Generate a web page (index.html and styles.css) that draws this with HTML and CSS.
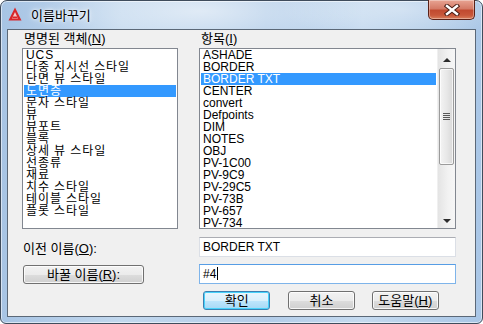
FILE: index.html
```html
<!DOCTYPE html>
<html lang="ko">
  <head>
    <meta charset="UTF-8" />
    <title>이름바꾸기</title>
    <link rel="stylesheet" href="styles.css">
  </head>
  <body>
    <!-- 대화상자 창 -->
    <div class="window">
      <div class="titlebar">
        <svg class="app-icon" width="14" height="14" viewBox="0 0 14 14">
          <polygon points="7,0.5 13.5,13.5 0.5,13.5" fill="#d8262a"/>
          <polygon points="7,5 10,11.5 4,11.5" fill="#f6c9c6"/>
          <rect x="4.5" y="9.5" width="5" height="1.6" fill="#d8262a"/>
        </svg>
        <span class="title">이름바꾸기</span>
        <div class="close-btn">
          <svg width="16" height="12" viewBox="0 0 16 12">
            <path d="M3 2 L13 10 M13 2 L3 10" stroke="#4a1d15" stroke-width="4.4" stroke-linecap="square"/>
            <path d="M3 2 L13 10 M13 2 L3 10" stroke="#ffffff" stroke-width="2.4" stroke-linecap="square"/>
          </svg>
        </div>
      </div>

      <div class="client">
        <div class="lists">
          <div class="col">
            <div class="label">명명된 객체(<u>N</u>)</div>
            <div class="listbox left-box">
              <ul class="items hangul">
                <li>UCS</li>
                <li>다중 지시선 스타일</li>
                <li>단면 뷰 스타일</li>
                <li class="sel">도면층</li>
                <li>문자 스타일</li>
                <li>뷰</li>
                <li>뷰포트</li>
                <li>블록</li>
                <li>상세 뷰 스타일</li>
                <li>선종류</li>
                <li>재료</li>
                <li>치수 스타일</li>
                <li>테이블 스타일</li>
                <li>플롯 스타일</li>
              </ul>
            </div>
          </div>
          <div class="col">
            <div class="label">항목(<u>I</u>)</div>
            <div class="listbox right-box">
              <ul class="items latin">
                <li>ASHADE</li>
                <li>BORDER</li>
                <li class="sel">BORDER TXT</li>
                <li>CENTER</li>
                <li>convert</li>
                <li>Defpoints</li>
                <li>DIM</li>
                <li>NOTES</li>
                <li>OBJ</li>
                <li>PV-1C00</li>
                <li>PV-9C9</li>
                <li>PV-29C5</li>
                <li>PV-73B</li>
                <li>PV-657</li>
                <li>PV-734</li>
              </ul>
              <!-- 스크롤바 -->
              <div class="scrollbar">
                <div class="sb-btn"><span class="arrow up"></span></div>
                <div class="sb-track">
                  <div class="sb-thumb">
                    <div class="grip"></div>
                  </div>
                </div>
                <div class="sb-btn"><span class="arrow down"></span></div>
              </div>
            </div>
          </div>
        </div>

        <div class="form-row">
          <div class="form-left"><span class="plain-label">이전 이름(<u>O</u>):</span></div>
          <div class="field latin">BORDER TXT</div>
        </div>
        <div class="form-row row2">
          <div class="form-left"><div class="btn rename-btn">바꿀 이름(<u>R</u>):</div></div>
          <div class="field latin focus">#4<span class="caret"></span></div>
        </div>
        <div class="buttons">
          <div class="btn default">확인</div>
          <div class="btn">취소</div>
          <div class="btn">도움말(<u>H</u>)</div>
        </div>
      </div>
    </div>
  </body>
</html>
```

FILE: styles.css
```css
* {
  list-style: none;
  padding: 0;
  margin: 0;
  box-sizing: border-box;
}
body {
  width: 483px;
  height: 324px;
  overflow: hidden;
  font-family: "Liberation Sans", "Noto Sans CJK KR", sans-serif;
  font-size: 13px;
  color: #000;
  background: #fff;
}
.latin {
  font-size: 12px;
}

/* 창 테두리 */
.window {
  width: 483px;
  height: 324px;
  border: 1px solid #3f4c5c;
  border-radius: 7px 7px 6px 6px;
  padding: 0 6px 6px 6px;
  background:
    radial-gradient(ellipse 160px 40px at 200px 10px, rgba(255,255,255,0.55), rgba(255,255,255,0)),
    radial-gradient(ellipse 120px 30px at 400px 8px, rgba(255,255,255,0.35), rgba(255,255,255,0)),
    linear-gradient(to right, #a7c4e4, #c2d8ee 25%, #b3cde9 55%, #c5daef 75%, #a9c6e6);
  box-shadow: inset 0 0 0 1px rgba(255,255,255,0.55);
  position: relative;
}
.titlebar {
  height: 28px;
  display: flex;
  align-items: center;
  padding-left: 1px;
  padding-bottom: 2px;
}
.app-icon {
  margin-right: 9px;
}
.title {
  text-shadow: 0 0 6px #fff, 0 0 3px #fff;
}
.close-btn {
  position: absolute;
  top: -1px;
  right: 7px;
  width: 47px;
  height: 20px;
  border: 1px solid #5a2117;
  border-top: none;
  border-radius: 0 0 5px 5px;
  background: linear-gradient(to bottom, #e8a493 0%, #d57b67 45%, #c14a30 55%, #c8573a 80%, #d97f5c 100%);
  box-shadow: inset 0 0 0 1px rgba(255,255,255,0.35);
  display: flex;
  align-items: center;
  justify-content: center;
}

/* 클라이언트 영역 */
.client {
  height: 288px;
  border: 1px solid #5b6877;
  background: #f0f0f0;
  padding: 2px 18px 0 14px;
}
.lists {
  display: grid;
  grid-template-columns: 156px 257px;
  column-gap: 21px;
}
.label {
  height: 16px;
  line-height: 14px;
  padding-left: 2px;
}
.listbox {
  height: 181px;
  border: 1px solid #828790;
  background: #fff;
  display: flex;
  overflow: hidden;
}
.items {
  flex: 1;
  padding: 0 1px;
  min-width: 0;
}
.items li {
  height: 12px;
  line-height: 12px;
  padding-left: 2px;
  white-space: nowrap;
}
.hangul li {
  font-size: 12px;
  letter-spacing: 0.9px;
}
.items li.sel {
  background: #3399ff;
  color: #fff;
}

/* 스크롤바 */
.scrollbar {
  width: 18px;
  display: flex;
  flex-direction: column;
  background: linear-gradient(to right, #e4e4e4, #f2f2f2 60%, #f6f6f6);
  border-left: 1px solid #f0f0f0;
}
.sb-btn {
  height: 17px;
  display: flex;
  align-items: center;
  justify-content: center;
}
.arrow {
  width: 0;
  height: 0;
  border-left: 4px solid transparent;
  border-right: 4px solid transparent;
}
.arrow.up {
  border-bottom: 4px solid #2c2c2c;
  margin-top: 4px;
}
.arrow.down {
  border-top: 4px solid #2c2c2c;
  margin-top: 2px;
}
.sb-track {
  flex: 1;
  padding-top: 2px;
}
.sb-thumb {
  height: 97px;
  margin: 0 1px;
  border: 1px solid #9b9b9b;
  border-radius: 2px;
  background: linear-gradient(to right, #f4f4f4, #e8e8e8 50%, #d9d9d9);
  box-shadow: inset 0 0 0 1px rgba(255,255,255,0.7);
  display: flex;
  align-items: center;
  justify-content: center;
}
.grip {
  width: 7px;
  height: 7px;
  background: repeating-linear-gradient(to bottom, #585858 0 1px, transparent 1px 2px);
}

/* 아래 입력 영역 */
.form-row {
  display: flex;
  align-items: center;
  margin-top: 8px;
  height: 20px;
}
.row2 {
  margin-top: 7px;
}
.form-left {
  width: 177px;
}
.plain-label {
  padding-left: 1px;
}
.field {
  width: 257px;
  height: 20px;
  border: 1px solid #dbdfe6;
  border-top-color: #abadb3;
  background: #fff;
  padding-left: 3px;
  line-height: 18px;
}
.field.focus {
  border-color: #7eb4ea;
  border-top-color: #569de5;
}
.caret {
  display: inline-block;
  width: 1px;
  height: 13px;
  background: #000;
  vertical-align: -2px;
  margin-left: 1px;
}
.btn {
  height: 19px;
  border: 1px solid #707070;
  border-radius: 3px;
  background: linear-gradient(to bottom, #f2f2f2 0%, #ebebeb 50%, #dddddd 51%, #cfcfcf 100%);
  box-shadow: inset 0 0 0 1px rgba(255,255,255,0.8);
  text-align: center;
  line-height: 17px;
}
.rename-btn {
  width: 121px;
  margin-left: 1px;
}
.buttons {
  display: flex;
  margin-top: 7px;
  padding-left: 181px;
}
.buttons .btn {
  width: 71px;
  margin-right: 18px;
}
.buttons .btn:nth-child(2) {
  width: 70px;
  margin-right: 17px;
}
.btn.default {
  border-color: #3c7fb1;
  background: linear-gradient(to bottom, #eaf6fd 0%, #d9f0fc 50%, #bee6fd 51%, #a7d9f5 100%);
  box-shadow: inset 0 0 0 1px #48d3fb;
}
```
